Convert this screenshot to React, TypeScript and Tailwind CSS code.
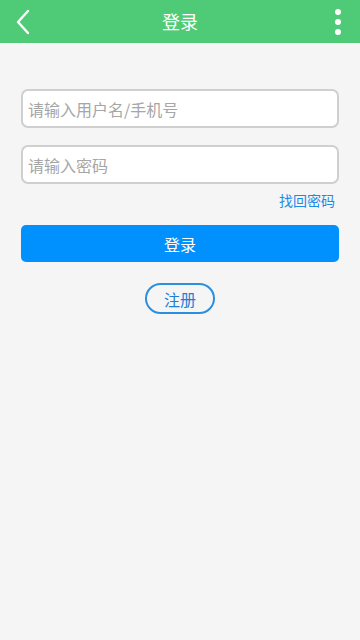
export default function App() {
  const font = { fontFamily: '"Noto Sans CJK SC", "Noto Sans", sans-serif' };

  return (
    <div className="min-h-[640px] w-full bg-[#f5f5f5]" style={font}>
      {/* header */}
      <div className="grid h-[43px] grid-cols-[44px_1fr_44px] items-center bg-[#4fcb78]">
        <svg width="20" height="26" viewBox="0 0 20 26" className="ml-[15px]">
          <path d="M13 2 L3 13 L13 24" fill="none" stroke="#fff" strokeWidth="2.4" strokeLinecap="round" strokeLinejoin="round" />
        </svg>
        <div className="text-center text-[18px] text-white">登录</div>
        <div className="flex flex-col items-end gap-[4px] pr-[19px]">
          <span className="h-[6px] w-[6px] rounded-full bg-white" />
          <span className="h-[6px] w-[6px] rounded-full bg-white" />
          <span className="h-[6px] w-[6px] rounded-full bg-white" />
        </div>
      </div>

      {/* form */}
      <div className="flex flex-col px-[21px] pt-[46px]">
        <input
          className="h-[39px] w-full rounded-[7px] border-2 border-[#cfcfcf] bg-white px-[5px] text-[16px] text-[#333] outline-none placeholder:text-[#a6a6a6]"
          placeholder="请输入用户名/手机号"
        />
        <input
          type="password"
          className="mt-[17px] h-[39px] w-full rounded-[7px] border-2 border-[#cfcfcf] bg-white px-[5px] text-[16px] text-[#333] outline-none placeholder:text-[#a6a6a6]"
          placeholder="请输入密码"
        />
        <div className="mt-[7px] flex justify-end pr-[4px]">
          <span className="text-[14px] leading-[18px] text-[#1e8ae6]">找回密码</span>
        </div>
        <button className="mt-[16px] h-[37px] w-full rounded-[5px] bg-[#0091ff] text-[16px] text-white">
          登录
        </button>
        <div className="mt-[21px] flex justify-center">
          <button className="h-[31px] w-[70px] rounded-full border-2 border-[#2b8fe0] text-[16px] text-[#1e7fd6]">
            注册
          </button>
        </div>
      </div>
    </div>
  );
}
